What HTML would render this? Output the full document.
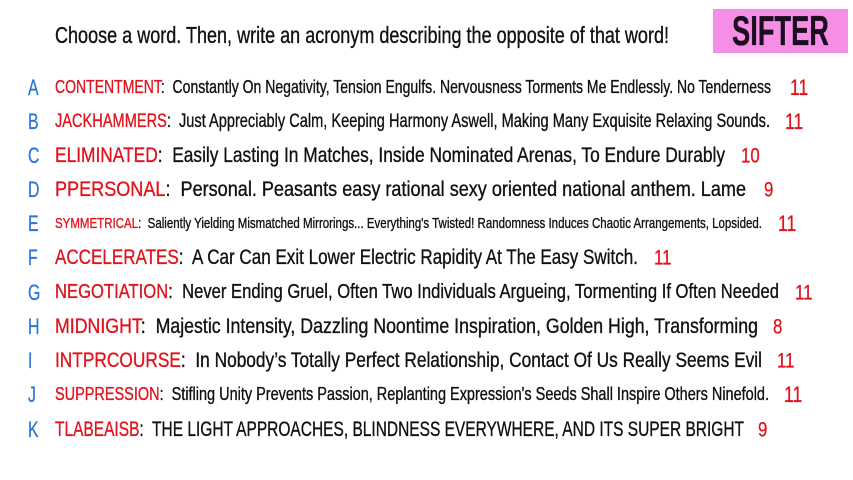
<!DOCTYPE html>
<html><head><meta charset="utf-8">
<style>
html,body{margin:0;padding:0;background:#fff;width:853px;height:480px;overflow:hidden;position:relative}
body{font-family:"Liberation Sans Narrow","Liberation Sans",sans-serif;color:#111}
.fit{position:absolute;white-space:nowrap;transform-origin:0 50%;line-height:1;-webkit-text-stroke:0.35px currentColor}
.l{position:absolute;left:28px;color:#2a78d6;font-size:22px;line-height:1;transform:translateY(-50%) scaleX(0.72);transform-origin:0 50%;-webkit-text-stroke:0.3px currentColor}
.w{color:#e0141e}
.n{position:absolute;color:#e0141e;line-height:1;transform:translateY(-50%) scaleX(0.8);transform-origin:0 50%;-webkit-text-stroke:0.3px currentColor}
#sifter{position:absolute;left:713px;top:9px;width:135px;height:44px;background:#f78ee6}
</style></head><body>
<div class="fit" data-x="55" data-e="669" data-y="35" style="font-size:23px">Choose a word. Then, write an acronym describing the opposite of that word!</div>
<div id="sifter"></div>
<div class="fit" data-x="732" data-e="829" data-y="31" style="font-size:42px;font-weight:bold;color:#1a0f1e">SIFTER</div>

<div class="l" style="top:88px">A</div>
<div class="fit" data-x="55" data-e="771" data-y="87" style="font-size:18px"><span class="w">CONTENTMENT</span>:&nbsp; Constantly On Negativity, Tension Engulfs. Nervousness Torments Me Endlessly. No Tenderness</div>
<div class="n" style="left:790px;top:88px;font-size:22px">11</div>

<div class="l" style="top:122px">B</div>
<div class="fit" data-x="55" data-e="770" data-y="121" style="font-size:19px"><span class="w">JACKHAMMERS</span>:&nbsp; Just Appreciably Calm, Keeping Harmony Aswell, Making Many Exquisite Relaxing Sounds.</div>
<div class="n" style="left:785px;top:122px;font-size:22px">11</div>

<div class="l" style="top:156px">C</div>
<div class="fit" data-x="55" data-e="725" data-y="155" style="font-size:21px"><span class="w">ELIMINATED</span>:&nbsp; Easily Lasting In Matches, Inside Nominated Arenas, To Endure Durably</div>
<div class="n" style="left:741px;top:156px;font-size:21px">10</div>

<div class="l" style="top:190px">D</div>
<div class="fit" data-x="55" data-e="746" data-y="189" style="font-size:21px"><span class="w">PPERSONAL</span>:&nbsp; Personal. Peasants easy rational sexy oriented national anthem. Lame</div>
<div class="n" style="left:764px;top:190px;font-size:21px">9</div>

<div class="l" style="top:224px">E</div>
<div class="fit" data-x="55" data-e="762" data-y="223" style="font-size:15px"><span class="w">SYMMETRICAL</span>:&nbsp; Saliently Yielding Mismatched Mirrorings... Everything's Twisted! Randomness Induces Chaotic Arrangements, Lopsided.</div>
<div class="n" style="left:778px;top:224px;font-size:22px">11</div>

<div class="l" style="top:258px">F</div>
<div class="fit" data-x="55" data-e="638" data-y="257" style="font-size:21px"><span class="w">ACCELERATES</span>:&nbsp; A Car Can Exit Lower Electric Rapidity At The Easy Switch.</div>
<div class="n" style="left:654px;top:258px;font-size:21px">11</div>

<div class="l" style="top:293px">G</div>
<div class="fit" data-x="55" data-e="779" data-y="292" style="font-size:20px"><span class="w">NEGOTIATION</span>:&nbsp; Never Ending Gruel, Often Two Individuals Argueing, Tormenting If Often Needed</div>
<div class="n" style="left:795px;top:293px;font-size:21px">11</div>

<div class="l" style="top:327px">H</div>
<div class="fit" data-x="55" data-e="758" data-y="326" style="font-size:21px"><span class="w">MIDNIGHT</span>:&nbsp; Majestic Intensity, Dazzling Noontime Inspiration, Golden High, Transforming</div>
<div class="n" style="left:773px;top:327px;font-size:21px">8</div>

<div class="l" style="top:361px">I</div>
<div class="fit" data-x="55" data-e="762" data-y="360" style="font-size:21px"><span class="w">INTPRCOURSE</span>:&nbsp; In Nobody’s Totally Perfect Relationship, Contact Of Us Really Seems Evil</div>
<div class="n" style="left:777px;top:361px;font-size:21px">11</div>

<div class="l" style="top:395px">J</div>
<div class="fit" data-x="55" data-e="769" data-y="394" style="font-size:18px"><span class="w">SUPPRESSION</span>:&nbsp; Stifling Unity Prevents Passion, Replanting Expression's Seeds Shall Inspire Others Ninefold.</div>
<div class="n" style="left:784px;top:395px;font-size:22px">11</div>

<div class="l" style="top:430px">K</div>
<div class="fit" data-x="55" data-e="744" data-y="429" style="font-size:21px"><span class="w">TLABEAISB</span>:&nbsp; THE LIGHT APPROACHES, BLINDNESS EVERYWHERE, AND ITS SUPER BRIGHT</div>
<div class="n" style="left:758px;top:430px;font-size:21px">9</div>

<script>
document.querySelectorAll('.fit').forEach(function(el){
  var x=+el.dataset.x,e=+el.dataset.e,y=+el.dataset.y;
  el.style.left=x+'px';
  var r=el.getBoundingClientRect();
  el.style.top=(y-r.height/2)+'px';
  el.style.transform='scaleX('+((e-x)/r.width)+')';
});
</script>
</body></html>
